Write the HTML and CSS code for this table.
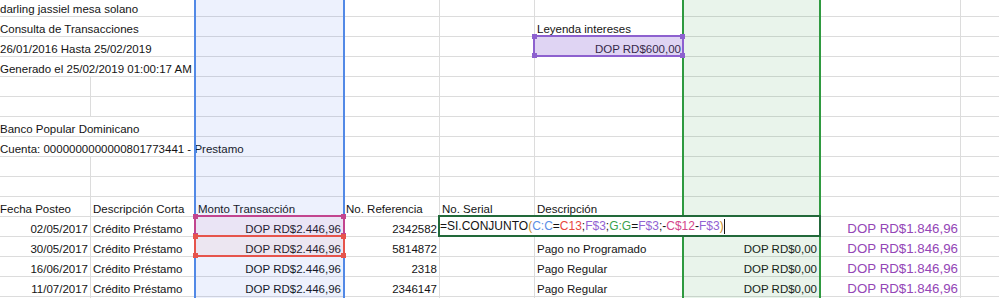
FILE: index.html
```html
<!DOCTYPE html>
<html lang="es">
<head>
<meta charset="utf-8">
<title>Consulta de Transacciones</title>
<link rel="stylesheet" href="styles.css">
</head>
<body>
<div class="sheet">
  <div class="grid">
    <div class="row"><div class="c span2">darling jassiel mesa solano</div><div class="c"></div><div class="c"></div><div class="c"></div><div class="c"></div><div class="c"></div><div class="c"></div><div class="c"></div></div>
    <div class="row"><div class="c span2">Consulta de Transacciones</div><div class="c"></div><div class="c"></div><div class="c"></div><div class="c">Leyenda intereses</div><div class="c"></div><div class="c"></div><div class="c"></div></div>
    <div class="row"><div class="c span2">26/01/2016 Hasta 25/02/2019</div><div class="c"></div><div class="c"></div><div class="c"></div><div class="c r">DOP RD$600,00</div><div class="c"></div><div class="c"></div><div class="c"></div></div>
    <div class="row"><div class="c span2">Generado el 25/02/2019 01:00:17 AM</div><div class="c"></div><div class="c"></div><div class="c"></div><div class="c"></div><div class="c"></div><div class="c"></div><div class="c"></div></div>
    <div class="row"><div class="c"></div><div class="c"></div><div class="c"></div><div class="c"></div><div class="c"></div><div class="c"></div><div class="c"></div><div class="c"></div><div class="c"></div></div>
    <div class="row"><div class="c"></div><div class="c"></div><div class="c"></div><div class="c"></div><div class="c"></div><div class="c"></div><div class="c"></div><div class="c"></div><div class="c"></div></div>
    <div class="row"><div class="c span2">Banco Popular Dominicano</div><div class="c"></div><div class="c"></div><div class="c"></div><div class="c"></div><div class="c"></div><div class="c"></div><div class="c"></div></div>
    <div class="row"><div class="c span3">Cuenta: 0000000000000801773441 - Prestamo</div><div class="c"></div><div class="c"></div><div class="c"></div><div class="c"></div><div class="c"></div><div class="c"></div></div>
    <div class="row"><div class="c"></div><div class="c"></div><div class="c"></div><div class="c"></div><div class="c"></div><div class="c"></div><div class="c"></div><div class="c"></div><div class="c"></div></div>
    <div class="row"><div class="c"></div><div class="c"></div><div class="c"></div><div class="c"></div><div class="c"></div><div class="c"></div><div class="c"></div><div class="c"></div><div class="c"></div></div>
    <div class="row"><div class="c">Fecha Posteo</div><div class="c">Descripción Corta</div><div class="c">Monto Transacción</div><div class="c">No. Referencia</div><div class="c">No. Serial</div><div class="c">Descripción</div><div class="c"></div><div class="c"></div><div class="c"></div></div>
    <div class="row"><div class="c r">02/05/2017</div><div class="c">Crédito Préstamo</div><div class="c r">DOP RD$2.446,96</div><div class="c r">2342582</div><div class="c"></div><div class="c"></div><div class="c"></div><div class="c r big">DOP RD$1.846,96</div><div class="c"></div></div>
    <div class="row"><div class="c r">30/05/2017</div><div class="c">Crédito Préstamo</div><div class="c r">DOP RD$2.446,96</div><div class="c r">5814872</div><div class="c"></div><div class="c">Pago no Programado</div><div class="c r">DOP RD$0,00</div><div class="c r big">DOP RD$1.846,96</div><div class="c"></div></div>
    <div class="row"><div class="c r">16/06/2017</div><div class="c">Crédito Préstamo</div><div class="c r">DOP RD$2.446,96</div><div class="c r">2318</div><div class="c"></div><div class="c">Pago Regular</div><div class="c r">DOP RD$0,00</div><div class="c r big">DOP RD$1.846,96</div><div class="c"></div></div>
    <div class="row"><div class="c r">11/07/2017</div><div class="c">Crédito Préstamo</div><div class="c r">DOP RD$2.446,96</div><div class="c r">2346147</div><div class="c"></div><div class="c">Pago Regular</div><div class="c r">DOP RD$0,00</div><div class="c r big">DOP RD$1.846,96</div><div class="c"></div></div>
    <div class="row"><div class="c"></div><div class="c"></div><div class="c"></div><div class="c"></div><div class="c"></div><div class="c"></div><div class="c"></div><div class="c"></div><div class="c"></div></div>
  </div>

  <div class="colsel colsel-blue"></div>
  <div class="colsel colsel-green"></div>

  <div class="range range-legend"><span class="h tl"></span><span class="h tr"></span><span class="h bl"></span><span class="h br"></span></div>
  <div class="range range-c13"><span class="h tl"></span><span class="h tr"></span><span class="h bl"></span><span class="h br"></span></div>
  <div class="range range-c14"><span class="h tl"></span><span class="h tr"></span><span class="h bl"></span><span class="h br"></span></div>

  <div class="editor"><span class="k">=SI.CONJUNTO</span><span class="p">(</span><span class="blue">C:C</span><span class="k">=</span><span class="red">C13</span><span class="k">;</span><span class="purple">F$3</span><span class="k">;</span><span class="green">G:G</span><span class="k">=</span><span class="purple">F$3</span><span class="k">;-</span><span class="pink">C$12</span><span class="k">-</span><span class="purple">F$3</span><span class="p">)</span><span class="caret"></span></div>
</div>
</body>
</html>
```
FILE: styles.css
```css
* { box-sizing: border-box; }
html, body { margin: 0; padding: 0; background: #fff; }
body {
  font-family: "Liberation Sans", Arial, sans-serif;
  font-size: 11.5px;
  color: #141414;
}
.sheet {
  position: relative;
  width: 999px;
  height: 298px;
  overflow: hidden;
}
.grid {
  margin-top: -3px;
  margin-left: -2px;
  width: 1010px;
}
.row {
  display: grid;
  grid-template-columns: 93px 105px 148px 96px 95px 149px 136px 141px 1fr;
  height: 20px;
}
.c {
  height: 20px;
  border-right: 1px solid #dcdcdc;
  border-bottom: 1px solid #dcdcdc;
  padding: 5px 2px 0 2px;
  line-height: 14px;
  white-space: nowrap;
  overflow: hidden;
}
.c.r { text-align: right; }
.c.span2 { grid-column: span 2; overflow: visible; }
.c.span3 { grid-column: span 3; overflow: visible; }
.c.big {
  font-size: 13.3px;
  color: #9446b6;
  padding-top: 4px;
  line-height: 15px;
}

/* column selections */
.colsel {
  position: absolute;
  top: 0;
  bottom: 0;
  border-left: 2px solid;
  border-right: 2px solid;
}
.colsel-blue {
  left: 194px;
  width: 151px;
  border-color: #5289e6;
  background: rgba(60, 100, 230, 0.09);
}
.colsel-green {
  left: 682px;
  width: 139px;
  border-color: #2f9a40;
  background: rgba(40, 150, 60, 0.1);
}

/* referenced ranges */
.range {
  position: absolute;
  border: 2px solid;
}
.range .h {
  position: absolute;
  width: 5px;
  height: 5px;
  background: inherit;
}
.range .h.tl { left: -3px; top: -3px; }
.range .h.tr { right: -3px; top: -3px; }
.range .h.bl { left: -3px; bottom: -3px; }
.range .h.br { right: -3px; bottom: -3px; }
.range-legend {
  left: 533px;
  top: 35px;
  width: 151px;
  height: 22px;
  border-color: #8d61cf;
  background-color: rgba(130, 90, 210, 0.26);
}
.range-legend .h { background: #8d61cf; }
.range-c13 {
  left: 194px;
  top: 215px;
  width: 151px;
  height: 22px;
  border-color: #c2458f;
  background-color: rgba(200, 60, 140, 0.07);
}
.range-c13 .h { background: #c2458f; }
.range-c14 {
  left: 194px;
  top: 235px;
  width: 151px;
  height: 22px;
  border-color: #e6544c;
  background-color: rgba(230, 80, 80, 0.07);
}
.range-c14 .h { background: #e6544c; }

/* in-cell formula editor */
.editor {
  position: absolute;
  left: 438px;
  top: 215px;
  width: 383px;
  height: 22px;
  border: 2px solid #22693a;
  background: #fff;
  font-size: 12px;
  line-height: 17px;
  padding: 1px 0 0 0;
  white-space: nowrap;
  display: flex;
  align-items: center;
}
.editor .k { color: #141414; }
.editor .p { color: #c98a1e; }
.editor .blue { color: #5a8ee6; }
.editor .red { color: #e8473d; }
.editor .purple { color: #9263d2; }
.editor .green { color: #3aa24c; }
.editor .pink { color: #d4468b; }
.editor .caret {
  display: inline-block;
  width: 1px;
  height: 15px;
  background: #141414;
}
```
